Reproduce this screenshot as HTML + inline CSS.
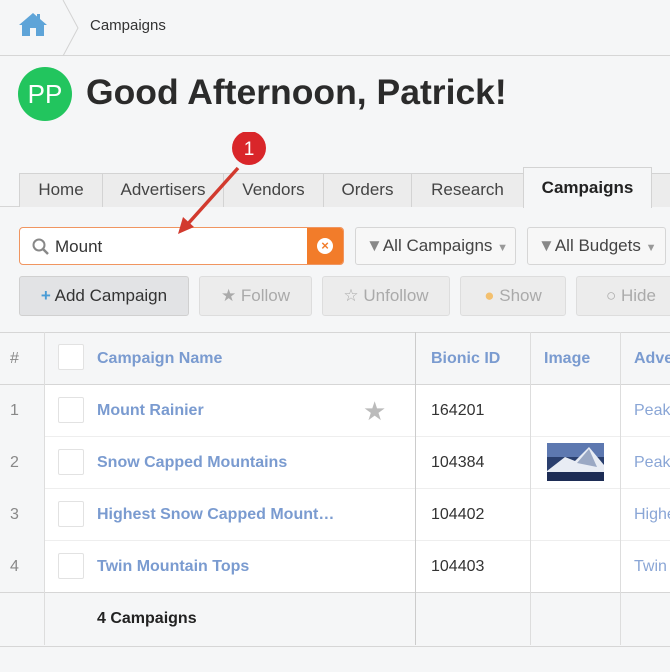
<!DOCTYPE html><html><head><style>
body{margin:0;width:670px;height:672px;background:#f5f6f7;font-family:"Liberation Sans",sans-serif;position:relative;overflow:hidden;color:#333}
.a{position:absolute}
.tab{position:absolute;top:173px;height:34px;background:#ececec;border:1px solid #d3d3d3;border-bottom:none;font-size:17px;color:#444;text-align:center;line-height:32px;box-sizing:border-box}
.btn{position:absolute;top:276px;height:40px;border-radius:3px;background:#ececec;border:1px solid #ddd;box-sizing:border-box;font-size:17px;color:#aaa;line-height:38px;text-align:center}
.dd{position:absolute;top:227px;height:38px;background:#f7f7f7;border:1px solid #d6d6d6;border-radius:3px;box-sizing:border-box;font-size:17px;color:#444;line-height:36px;padding-left:10px}
.dd i{font-style:normal;color:#888}
.cb{position:absolute;left:58px;width:26px;height:26px;background:#fff;border:1px solid #e2e2e2;border-radius:2px;box-sizing:border-box}
.lk{position:absolute;left:97px;font-size:16px;font-weight:bold;color:#7a9bd0}
.num{position:absolute;left:10px;font-size:16px;color:#888}
.id{position:absolute;left:431px;font-size:16px;color:#333}
.adv{position:absolute;left:634px;font-size:16px;color:#8aa6d6}
</style></head><body>
<div class="a" style="left:0;top:0;width:670px;height:55px;border-bottom:1px solid #d6d6d6"></div>
<svg class="a" style="left:18px;top:11px" width="30" height="26" viewBox="0 0 30 26"><path d="M15 2 L1 14 L4 14 L4 25 L12 25 L12 17 L18 17 L18 25 L26 25 L26 14 L29 14 L22 8 L22 3 L19 3 L19 5.5 Z" fill="#5ea4d8"/></svg>
<svg class="a" style="left:62px;top:0" width="20" height="56"><path d="M1 0 L16 28 L1 56" fill="none" stroke="#d3d3d3" stroke-width="1"/></svg>
<div class="a" style="left:90px;top:17px;font-size:15px;color:#333">Campaigns</div>
<div class="a" style="left:18px;top:67px;width:54px;height:54px;border-radius:50%;background:#22c55e;color:#fff;font-size:26px;line-height:54px;text-align:center">PP</div>
<div class="a" style="left:86px;top:72px;font-size:35.5px;font-weight:bold;color:#2b2b2b">Good Afternoon, Patrick!</div>
<div class="a" style="left:0;top:206px;width:670px;border-top:1px solid #d6d6d6"></div>
<div class="tab" style="left:19px;width:84px">Home</div>
<div class="tab" style="left:102px;width:122px">Advertisers</div>
<div class="tab" style="left:223px;width:101px">Vendors</div>
<div class="tab" style="left:323px;width:89px">Orders</div>
<div class="tab" style="left:411px;width:113px">Research</div>
<div class="tab" style="left:523px;top:167px;height:41px;width:129px;background:#f5f6f7;font-weight:bold;color:#222;line-height:40px">Campaigns</div>
<div class="tab" style="left:651px;width:30px"></div>
<div class="a" style="left:19px;top:227px;width:325px;height:38px;border:1px solid #f09560;border-radius:4px;background:#fff;box-sizing:border-box;overflow:hidden">
<svg class="a" style="left:12px;top:10px" width="18" height="18"><circle cx="7" cy="7" r="5.5" fill="none" stroke="#888" stroke-width="2"/><path d="M11 11 L16 16" stroke="#888" stroke-width="2.5"/></svg>
<div class="a" style="left:35px;top:9px;font-size:17px;color:#333">Mount</div>
<div class="a" style="right:0;top:0;width:36px;height:38px;background:#f27c2a"><div class="a" style="left:10px;top:10px;width:16px;height:16px;border-radius:50%;background:#fff;color:#f27c2a;font-size:13px;font-weight:bold;line-height:16px;text-align:center">×</div></div>
</div>
<div class="dd" style="left:355px;width:161px"><i>▼</i>All Campaigns <span style="color:#999;font-size:11px">▼</span></div>
<div class="dd" style="left:527px;width:139px"><i>▼</i>All Budgets <span style="color:#999;font-size:11px">▼</span></div>
<div class="btn" style="left:19px;width:170px;background:#e2e3e5;border-color:#d0d0d0;color:#333"><span style="color:#4a9cd6;font-weight:bold">+</span> Add Campaign</div>
<div class="btn" style="left:199px;width:113px">★ Follow</div>
<div class="btn" style="left:322px;width:128px">☆ Unfollow</div>
<div class="btn" style="left:460px;width:106px"><span style="color:#f3c06f">●</span> Show</div>
<div class="btn" style="left:576px;width:110px">○ Hide</div>
<svg class="a" style="left:170px;top:132px" width="100" height="110"><circle cx="79" cy="16" r="17" fill="#d9262a"/><text x="79" y="23" font-family="Liberation Sans" font-size="19" fill="#fff" text-anchor="middle">1</text><path d="M68 36 L16 94" stroke="#d23a2e" stroke-width="3.5"/><path d="M8 102 L13 85 L24 95 Z" fill="#d23a2e"/></svg>
<div class="a" style="left:0;top:332px;width:670px;height:313px;border-top:1px solid #d6d6d6;border-bottom:1px solid #d6d6d6"></div>
<div class="a" style="left:44px;top:384px;width:626px;height:208px;background:#fff"></div>
<div class="a" style="left:0;top:384px;width:670px;border-top:1px solid #d6d6d6"></div>
<div class="a" style="left:44px;top:436px;width:626px;border-top:1px solid #eee"></div>
<div class="a" style="left:44px;top:488px;width:626px;border-top:1px solid #eee"></div>
<div class="a" style="left:44px;top:540px;width:626px;border-top:1px solid #eee"></div>
<div class="a" style="left:0;top:592px;width:670px;border-top:1px solid #d6d6d6"></div>
<div class="a" style="left:44px;top:332px;height:313px;border-left:1px solid #ddd"></div>
<div class="a" style="left:415px;top:332px;height:313px;border-left:1px solid #ccc"></div>
<div class="a" style="left:530px;top:332px;height:313px;border-left:1px solid #ddd"></div>
<div class="a" style="left:620px;top:332px;height:313px;border-left:1px solid #ddd"></div>
<div class="num" style="top:350px">#</div>
<div class="cb" style="top:344px"></div>
<div class="lk" style="top:350px">Campaign Name</div>
<div class="lk" style="left:431px;top:350px">Bionic ID</div>
<div class="lk" style="left:544px;top:350px">Image</div>
<div class="lk" style="left:634px;top:350px">Adve</div>
<div class="num" style="top:402px">1</div><div class="cb" style="top:397px"></div><div class="lk" style="top:402px">Mount Rainier</div>
<div class="a" style="left:363px;top:396px;font-size:26px;color:#bbb">★</div>
<div class="id" style="top:402px">164201</div><div class="adv" style="top:402px">Peak</div>
<div class="num" style="top:454px">2</div><div class="cb" style="top:449px"></div><div class="lk" style="top:454px">Snow Capped Mountains</div>
<div class="id" style="top:454px">104384</div><div class="adv" style="top:454px">Peak</div>
<svg class="a" style="left:547px;top:443px" width="57" height="38"><rect width="57" height="38" fill="#2a3f6e"/><rect width="57" height="14" fill="#5d78b0"/><path d="M0 28 L18 14 L28 18 L42 4 L57 22 L57 30 L0 30 Z" fill="#e8ecf4"/><path d="M30 20 L42 6 L50 24 Z" fill="#9aa8c4"/><rect y="29" width="57" height="9" fill="#1d2c55"/></svg>
<div class="num" style="top:506px">3</div><div class="cb" style="top:501px"></div><div class="lk" style="top:506px">Highest Snow Capped Mount…</div>
<div class="id" style="top:506px">104402</div><div class="adv" style="top:506px">Highe</div>
<div class="num" style="top:558px">4</div><div class="cb" style="top:553px"></div><div class="lk" style="top:558px">Twin Mountain Tops</div>
<div class="id" style="top:558px">104403</div><div class="adv" style="top:558px">Twin</div>
<div class="a" style="left:97px;top:610px;font-size:16px;font-weight:bold;color:#222">4 Campaigns</div>
</body></html>
